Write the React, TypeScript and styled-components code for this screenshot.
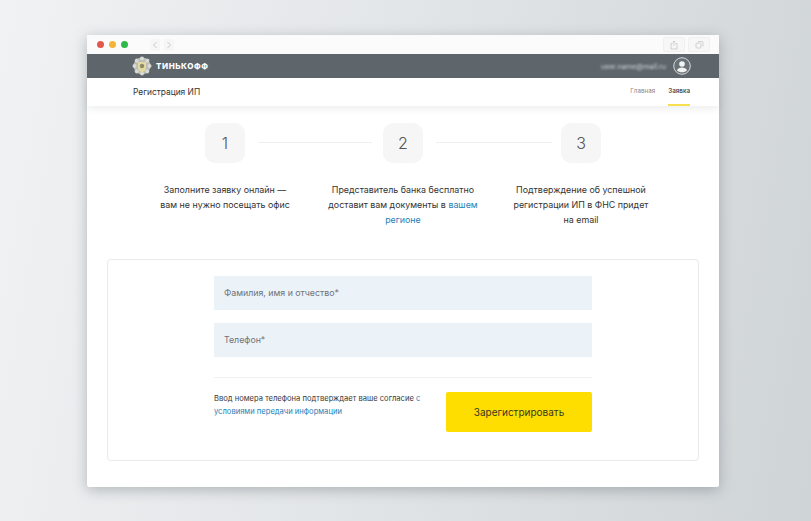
import React from "react";
import styled, {createGlobalStyle} from "styled-components";

const GlobalStyle = createGlobalStyle`
    html, body {
        margin: 0;
        padding: 0;
    }
    body {
        font-family: "Inter", "Liberation Sans", sans-serif;
        background: #d9dde0;
    }
`

const Page = styled.div`
    width: 811px;
    height: 521px;
    box-sizing: border-box;
    padding: 35px 0 0 87px;
    overflow: hidden;
    background: linear-gradient(100deg, #f0f2f3 0%, #e3e6e8 45%, #cfd4d7 100%);
`

const Browser = styled.div`
    width: 632px;
    height: 452px;
    background: #fff;
    display: flex;
    flex-direction: column;
    border-radius: 2px;
    box-shadow: 0 3px 14px rgba(70, 80, 88, 0.35);
`

const TitleBar = styled.div`
    height: 19px;
    flex: none;
    display: flex;
    align-items: center;
    padding: 0 7px 0 10px;
    background: #fbfbfb;
`

const Dot = styled.span<{ color: string }>`
    width: 7px;
    height: 7px;
    border-radius: 50%;
    margin-right: 5px;
    background: ${props => props.color};
`

const Arrows = styled.div`
    display: flex;
    gap: 4px;
    margin-left: 17px;
`

const ArrowBox = styled.span`
    width: 10px;
    height: 12px;
    display: flex;
    align-items: center;
    justify-content: center;
    background: #f6f6f6;
    border-radius: 2px;
`

const ToolButtons = styled.div`
    display: flex;
    gap: 3px;
    margin-left: auto;
    margin-right: 2px;
`

const ToolButton = styled.span`
    width: 20px;
    height: 13px;
    display: flex;
    align-items: center;
    justify-content: center;
    background: #f7f7f7;
    border: 1px solid #f0f0f0;
    border-radius: 2px;
`

const TopNav = styled.div`
    height: 24px;
    flex: none;
    display: flex;
    align-items: center;
    padding: 0 28px 0 45px;
    background: #5e666c;
`

const Brand = styled.span`
    margin-left: 4px;
    color: #fff;
    font-size: 8px;
    font-weight: 800;
    letter-spacing: 0.55px;
`

const Email = styled.span`
    margin-left: auto;
    margin-right: 7px;
    color: #d0d4d7;
    font-size: 7.2px;
    filter: blur(1px);
`

const SubNav = styled.div`
    height: 28px;
    flex: none;
    display: flex;
    align-items: center;
    padding: 0 29px 0 46px;
    background: #fff;
    box-shadow: 0 3px 7px rgba(90, 100, 110, 0.1);
    position: relative;
`

const PageTitle = styled.div`
    font-size: 8.4px;
    color: #333;
`

const Tabs = styled.div`
    display: flex;
    gap: 13px;
    margin-left: auto;
    height: 100%;
`

const Tab = styled.div<{ active?: boolean }>`
    display: flex;
    align-items: center;
    font-size: 6.3px;
    font-weight: ${props => props.active ? 500 : 400};
    color: ${props => props.active ? "#333" : "#8a8a8a"};
    border-bottom: 2px solid ${props => props.active ? "#f7e04f" : "transparent"};
`

const Content = styled.div`
    flex: 1;
    padding: 17px 20px 26px;
    display: flex;
    flex-direction: column;
`

const Badges = styled.div`
    display: flex;
    justify-content: center;
    align-items: center;
    height: 40px;
`

const Badge = styled.div`
    width: 40px;
    height: 40px;
    border-radius: 10px;
    background: #f6f6f6;
    display: flex;
    align-items: center;
    justify-content: center;
    font-size: 16px;
    font-weight: 300;
    color: #555;
`

const Connector = styled.div<{ size: number }>`
    width: ${props => props.size}px;
    height: 1px;
    margin: 0 ${props => 125 - props.size}px 2px 13px;
    background: #efefef;
`

const Steps = styled.div`
    display: grid;
    grid-template-columns: repeat(3, 178px);
    justify-content: center;
    margin-top: 19px;
    height: 77px;
`

const StepText = styled.div`
    text-align: center;
    font-size: 8.9px;
    line-height: 15px;
    color: #333;
`

const BlueLink = styled.span`
    color: #1f7fb8;
`

const Card = styled.div`
    height: 202px;
    box-sizing: border-box;
    padding: 16px 106px 0;
    border: 1px solid #e9eaeb;
    border-radius: 4px;
`

const Field = styled.div`
    height: 34px;
    box-sizing: border-box;
    margin-bottom: 13px;
    padding: 0 0 1px 10px;
    display: flex;
    align-items: center;
    background: #ebf2f8;
    font-size: 8.8px;
    color: #6f7378;
`

const Divider = styled.div`
    height: 1px;
    margin-top: 20px;
    background: #f0f0f0;
`

const Footer = styled.div`
    display: flex;
    justify-content: space-between;
    margin-top: 14px;
`

const Consent = styled.div`
    width: 212px;
    font-size: 7.6px;
    line-height: 13px;
    color: #3a3a3a;
`

const Submit = styled.button`
    width: 146px;
    height: 40px;
    border: none;
    border-radius: 2px;
    background: #fedd00;
    font-family: inherit;
    font-size: 10px;
    color: #3a3a20;
`

const Logo = () => (
    <svg width="20" height="20" viewBox="0 0 20 20">
        <circle cx="10" cy="10" r="8.500" fill="#b9bcb8"/>
        {[0, 45, 90, 135, 180, 225, 270, 315].map(a => (
            <circle key={a} cx="10" cy="2.500" r="2" fill="#d9dad4" transform={`rotate(${a} 10 10)`}/>
        ))}
        <path d="M6 6h8v6c0 2-2 3.500-4 4.500-2-1-4-2.500-4-4.500z" fill="#e4d9a0"/>
        <circle cx="10" cy="10" r="2.200" fill="#8d8a6a"/>
    </svg>
)

const UserIcon = () => (
    <svg width="18" height="18" viewBox="0 0 18 18">
        <circle cx="9" cy="9" r="8.300" fill="#6a7278" stroke="#d5d8da" strokeWidth="1"/>
        <circle cx="9" cy="7" r="2.800" fill="#f2f3f3"/>
        <path d="M4 13.500c.8-2.200 2.800-3 5-3s4.200.8 5 3c-1.200 1.200-3 1.800-5 1.800s-3.800-.6-5-1.800z" fill="#f2f3f3"/>
    </svg>
)

const Chevron = ({left}: { left?: boolean }) => (
    <svg width="6" height="8" viewBox="0 0 6 8">
        <path d={left ? "M4.500 1 1.500 4l3 3" : "M1.500 1l3 3-3 3"} fill="none" stroke="#c9cbcd" strokeWidth="1"/>
    </svg>
)

const ShareIcon = () => (
    <svg width="8" height="10" viewBox="0 0 8 10">
        <path d="M2.500 3.500H1v5.500h6V3.500H5.500M4 6V1M2.700 2.200 4 1l1.300 1.200" fill="none" stroke="#c4c6c8" strokeWidth="0.8"/>
    </svg>
)

const TabsIcon = () => (
    <svg width="9" height="9" viewBox="0 0 9 9">
        <rect x="1" y="3" width="5" height="5" rx="1" fill="none" stroke="#c4c6c8" strokeWidth="0.8"/>
        <path d="M3 1.500h4a1 1 0 0 1 1 1v4" fill="none" stroke="#c4c6c8" strokeWidth="0.8"/>
    </svg>
)

const App = () => {
    return (
        <Page>
            <GlobalStyle/>
            <Browser>
                <TitleBar>
                    <Dot color="#e2574c"/>
                    <Dot color="#f2b53a"/>
                    <Dot color="#2fb84a"/>
                    <Arrows>
                        <ArrowBox><Chevron left/></ArrowBox>
                        <ArrowBox><Chevron/></ArrowBox>
                    </Arrows>
                    <ToolButtons>
                        <ToolButton><ShareIcon/></ToolButton>
                        <ToolButton><TabsIcon/></ToolButton>
                    </ToolButtons>
                </TitleBar>
                <TopNav>
                    <Logo/>
                    <Brand>ТИНЬКОФФ</Brand>
                    <Email>user.name@mail.ru</Email>
                    <UserIcon/>
                </TopNav>
                <SubNav>
                    <PageTitle>Регистрация ИП</PageTitle>
                    <Tabs>
                        <Tab>Главная</Tab>
                        <Tab active>Заявка</Tab>
                    </Tabs>
                </SubNav>
                <Content>
                    <Badges>
                        <Badge>1</Badge>
                        <Connector size={114}/>
                        <Badge>2</Badge>
                        <Connector size={116}/>
                        <Badge>3</Badge>
                    </Badges>
                    <Steps>
                        <StepText>Заполните заявку онлайн —<br/>вам не нужно посещать офис</StepText>
                        <StepText>Представитель банка бесплатно<br/>доставит вам документы в <BlueLink>вашем<br/>регионе</BlueLink></StepText>
                        <StepText>Подтверждение об успешной<br/>регистрации ИП в ФНС придет<br/>на email</StepText>
                    </Steps>
                    <Card>
                        <Field>Фамилия, имя и отчество*</Field>
                        <Field>Телефон*</Field>
                        <Divider/>
                        <Footer>
                            <Consent>Ввод номера телефона подтверждает ваше согласие <BlueLink>с<br/>условиями передачи информации</BlueLink></Consent>
                            <Submit>Зарегистрировать</Submit>
                        </Footer>
                    </Card>
                </Content>
            </Browser>
        </Page>
    )
}

export default App;
